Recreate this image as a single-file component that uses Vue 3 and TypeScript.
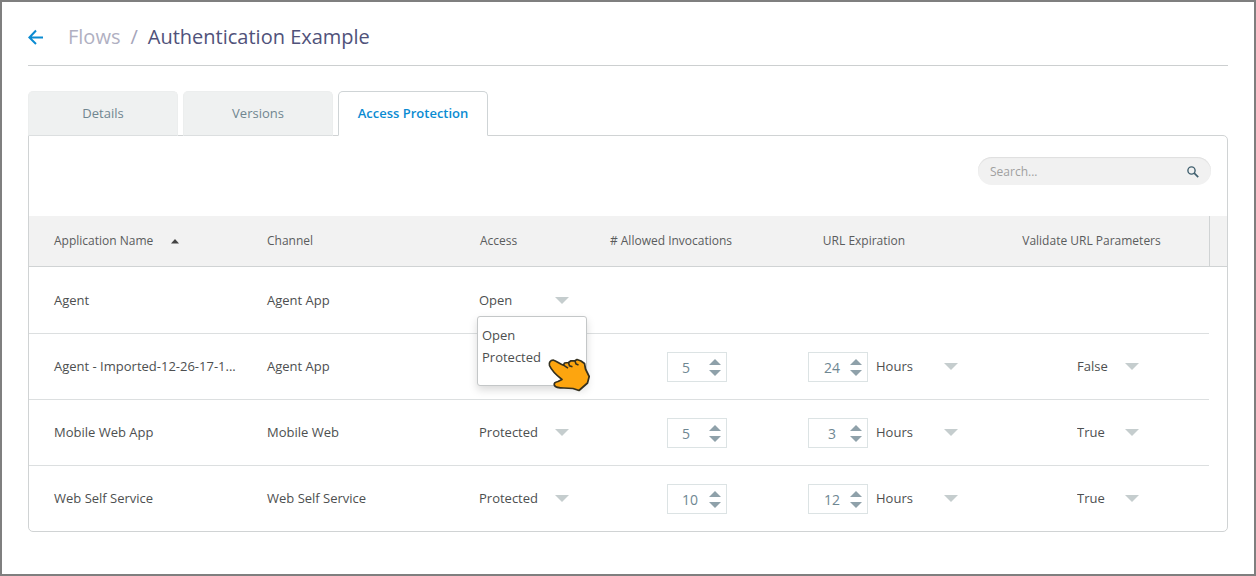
<script setup lang="ts">
import { ref } from 'vue'

interface AppRow {
  id: string
  name: string
  channel: string
  access: string
  invocations?: number
  expiration?: number
  unit?: string
  validate?: string
}

const tabs = ['Details', 'Versions', 'Access Protection']
const activeTab = ref('Access Protection')
const search = ref('')
const openRow = ref('agent')
const accessOptions = ['Open', 'Protected']

const rows = ref<AppRow[]>([
  { id: 'agent', name: 'Agent', channel: 'Agent App', access: 'Open' },
  {
    id: 'imported',
    name: 'Agent - Imported-12-26-17-1...',
    channel: 'Agent App',
    access: 'Protected',
    invocations: 5,
    expiration: 24,
    unit: 'Hours',
    validate: 'False',
  },
  {
    id: 'mobile',
    name: 'Mobile Web App',
    channel: 'Mobile Web',
    access: 'Protected',
    invocations: 5,
    expiration: 3,
    unit: 'Hours',
    validate: 'True',
  },
  {
    id: 'self',
    name: 'Web Self Service',
    channel: 'Web Self Service',
    access: 'Protected',
    invocations: 10,
    expiration: 12,
    unit: 'Hours',
    validate: 'True',
  },
])

function step(row: AppRow, key: 'invocations' | 'expiration', delta: number) {
  row[key] = Math.max(0, (row[key] ?? 0) + delta)
}

function choose(row: AppRow, option: string) {
  row.access = option
  openRow.value = ''
}
</script>

<template>
  <main class="page">
    <header class="head">
      <a href="#flows" class="back" aria-label="Back to flows">
        <svg width="16" height="16" viewBox="0 0 16 16" fill="none" stroke="#0a8bd2" stroke-width="2">
          <path d="M15 8.500H1.500M8 1.500L1.400 8.500l6.600 6.500" />
        </svg>
      </a>
      <a href="#flows" class="crumb">Flows</a>
      <span class="slash">/</span>
      <h1 class="title">Authentication Example</h1>
    </header>

    <div class="tabs" role="tablist">
      <button
        v-for="tab in tabs"
        :key="tab"
        type="button"
        role="tab"
        class="tab"
        :class="{ active: tab === activeTab }"
        :aria-selected="tab === activeTab"
        @click="activeTab = tab"
      >
        {{ tab }}
      </button>
    </div>

    <section class="panel">
      <div class="toolbar">
        <label class="search">
          <input v-model="search" type="text" placeholder="Search..." aria-label="Search" />
          <svg width="12" height="12" viewBox="0 0 12 12" fill="none" stroke="#41606f">
            <circle cx="4.5" cy="4.5" r="3.6" stroke-width="1.4" />
            <path d="M7.2 7.2l4 4" stroke-width="1.7" />
          </svg>
        </label>
      </div>

      <table class="grid">
        <colgroup>
          <col class="c-name" />
          <col class="c-channel" />
          <col class="c-access" />
          <col class="c-inv" />
          <col class="c-exp" />
          <col class="c-val" />
          <col class="c-gutter" />
        </colgroup>
        <thead>
          <tr>
            <th scope="col">
              <span class="sorted">
                Application Name
                <svg width="8" height="5" viewBox="0 0 8 5"><path d="M0 4.5L4 0l4 4.5z" fill="#444" /></svg>
              </span>
            </th>
            <th scope="col">Channel</th>
            <th scope="col">Access</th>
            <th scope="col" class="mid"># Allowed Invocations</th>
            <th scope="col" class="mid">URL Expiration</th>
            <th scope="col" class="mid">Validate URL Parameters</th>
            <td class="gutter"></td>
          </tr>
        </thead>
        <tbody>
          <tr v-for="row in rows" :key="row.id">
            <td class="name">{{ row.name }}</td>
            <td class="channel">{{ row.channel }}</td>
            <td class="access">
              <div class="pick pick-access">
                <select v-model="row.access" :aria-label="`Access for ${row.name}`">
                  <option v-for="o in accessOptions" :key="o">{{ o }}</option>
                </select>
                <svg width="14" height="7" viewBox="0 0 14 7"><path d="M0 0h14L7 7z" /></svg>
                <div v-if="row.id === openRow" class="menu" role="listbox" aria-label="Access options">
                  <button
                    v-for="o in accessOptions"
                    :key="o"
                    type="button"
                    role="option"
                    class="menu-item"
                    :aria-selected="o === row.access"
                    @click="choose(row, o)"
                  >
                    {{ o }}
                  </button>
                  <svg class="hand" width="46" height="38" viewBox="0 0 46 38">
                    <path
                      d="M2.500 8.500C1.500 5.500 3.500 3 6.500 3.200C9.500 4.200 13 7 16.500 8.200L17.500 6L21.500 5.500L24 3.800L28 3.800L30 2.500L34 4L37.500 6.500L38.500 12L42.200 19.500L40.500 26L32 33.500L26 31.500L17 31C12 31 8.500 30.500 7.500 28.500C6.500 26.500 8 25 11 24.500L15 22.500C10.500 19 5 14.500 2.500 8.500Z"
                      fill="#fda50f"
                      stroke="#34301f"
                      stroke-width="1.7"
                      stroke-linejoin="round"
                    />
                    <path
                      d="M16.500 8.200l4.500 3M21.500 5.800l1 3 3 1M28 4l1 3 2.500 1"
                      fill="none"
                      stroke="#34301f"
                      stroke-width="1.6"
                    />
                  </svg>
                </div>
              </div>
            </td>
            <td class="inv">
              <div v-if="row.invocations !== undefined" class="spin spin-left">
                <input v-model="row.invocations" type="number" :aria-label="`Allowed invocations for ${row.name}`" />
                <span class="steps">
                  <button type="button" aria-label="Increase" @click="step(row, 'invocations', 1)">
                    <svg width="12" height="6" viewBox="0 0 12 6"><path d="M0 6h12L6 0z" /></svg>
                  </button>
                  <button type="button" aria-label="Decrease" @click="step(row, 'invocations', -1)">
                    <svg width="12" height="6" viewBox="0 0 12 6"><path d="M0 0h12L6 6z" /></svg>
                  </button>
                </span>
              </div>
            </td>
            <td class="exp">
              <div v-if="row.expiration !== undefined" class="duration">
                <div class="spin">
                  <input v-model="row.expiration" type="number" :aria-label="`URL expiration for ${row.name}`" />
                  <span class="steps">
                    <button type="button" aria-label="Increase" @click="step(row, 'expiration', 1)">
                      <svg width="12" height="6" viewBox="0 0 12 6"><path d="M0 6h12L6 0z" /></svg>
                    </button>
                    <button type="button" aria-label="Decrease" @click="step(row, 'expiration', -1)">
                      <svg width="12" height="6" viewBox="0 0 12 6"><path d="M0 0h12L6 6z" /></svg>
                    </button>
                  </span>
                </div>
                <div class="pick pick-unit">
                  <select v-model="row.unit" :aria-label="`Expiration unit for ${row.name}`">
                    <option>Hours</option>
                    <option>Days</option>
                  </select>
                  <svg width="14" height="7" viewBox="0 0 14 7"><path d="M0 0h14L7 7z" /></svg>
                </div>
              </div>
            </td>
            <td class="val">
              <div v-if="row.validate" class="pick pick-bool">
                <select v-model="row.validate" :aria-label="`Validate URL parameters for ${row.name}`">
                  <option>True</option>
                  <option>False</option>
                </select>
                <svg width="14" height="7" viewBox="0 0 14 7"><path d="M0 0h14L7 7z" /></svg>
              </div>
            </td>
            <td class="gutter"></td>
          </tr>
        </tbody>
      </table>
    </section>
  </main>
</template>

<style>
body {
  background: #fff;
}
</style>

<style scoped>
* {
  box-sizing: border-box;
}

.page {
  min-height: 100vh;
  border: 2px solid #7f7f7f;
  padding: 0 26px 26px;
  background: #fff;
  color: #4d4f50;
  font-family: 'Open Sans', 'Noto Sans', sans-serif;
  font-size: 13px;
  line-height: 18px;
}

button,
input,
select {
  font: inherit;
  color: inherit;
  margin: 0;
  padding: 0;
  border: 0;
  background: none;
  outline: none;
}

button {
  cursor: pointer;
}

.head {
  display: flex;
  align-items: center;
  height: 64px;
  padding-top: 6px;
  border-bottom: 1px solid #cccfd0;
  font-size: 20px;
  line-height: 28px;
}

.back {
  display: flex;
  margin-right: 24px;
}

.crumb {
  color: #b0b0c2;
  text-decoration: none;
}

.slash {
  margin: 0 10px;
  color: #a5a5ba;
}

.title {
  margin: 0;
  font-size: 20px;
  font-weight: 400;
  color: #50527a;
}

.tabs {
  position: relative;
  z-index: 1;
  display: flex;
  gap: 5px;
  margin: 25px 0 -1px;
}

.tab {
  width: 150px;
  height: 45px;
  padding-bottom: 2px;
  border: 1px solid #eceeee;
  border-bottom-color: #dcdfe0;
  border-radius: 5px 5px 0 0;
  background: #eff1f1;
  color: #708690;
}

.tab.active {
  border-color: #cfd4d6;
  border-bottom-color: #fff;
  background: #fff;
  color: #0a8bd2;
  font-weight: 600;
}

.panel {
  border: 1px solid #d0d3d4;
  border-radius: 0 5px 5px 5px;
}

.toolbar {
  display: flex;
  justify-content: flex-end;
  height: 80px;
  padding: 21px 16px 0 0;
}

.search {
  display: flex;
  align-items: center;
  width: 233px;
  height: 28px;
  padding: 1px 12px 0;
  border-radius: 14px;
  background: #f1f1f1;
  box-shadow: inset 0 1px 1px #dedede;
}

.search input {
  flex: 1;
  min-width: 0;
  font-size: 12px;
}

.search input::placeholder {
  color: #a0a0a0;
  opacity: 1;
}

.grid {
  width: 100%;
  table-layout: fixed;
  border-collapse: separate;
  border-spacing: 0;
}

.c-name,
.c-channel {
  width: 213px;
}

.c-access {
  width: 133px;
}

.c-inv {
  width: 166px;
}

.c-exp {
  width: 220px;
}

.c-val {
  width: 235px;
}

.c-gutter {
  width: 18px;
}

thead th,
thead td {
  height: 51px;
  padding: 0 0 0 25px;
  border-bottom: 1px solid #d0d3d4;
  background: #f2f2f2;
  color: #5a5c5d;
  font-size: 12px;
  font-weight: 500;
  text-align: left;
}

thead .mid {
  padding: 0;
  text-align: center;
}

thead .gutter {
  padding: 0;
  border-left: 1px solid #d0d3d4;
}

.sorted {
  display: flex;
  align-items: center;
  gap: 18px;
}

tbody td {
  height: 66px;
  padding: 0 0 0 25px;
  border-bottom: 1px solid #dcdfe0;
}

tbody tr:first-child td {
  height: 67px;
}

tbody tr:last-child td {
  height: 65px;
  border-bottom: 0;
}

tbody .gutter {
  padding: 0;
  border-bottom: 0;
}

tbody .name,
tbody .channel {
  padding-bottom: 1px;
}

.name {
  overflow: hidden;
  text-overflow: ellipsis;
  white-space: nowrap;
}

tbody .access {
  padding-left: 24px;
}

tbody .inv {
  padding-left: 79px;
}

tbody .exp {
  padding-left: 54px;
}

tbody .val {
  padding-left: 103px;
}

.pick {
  position: relative;
  display: flex;
  align-items: center;
}

.pick select {
  flex: 1;
  min-width: 0;
  padding-bottom: 1px;
  appearance: none;
}

.pick > svg {
  flex: none;
  fill: #c5cdce;
}

.pick-access {
  width: 90px;
}

.pick-unit {
  width: 82px;
}

.pick-bool {
  width: 62px;
}

.duration {
  display: flex;
  align-items: center;
  gap: 8px;
}

.spin {
  display: flex;
  align-items: center;
  width: 60px;
  height: 30px;
  padding-right: 5px;
  border: 1px solid #dce3e4;
  color: #6f8792;
}

.spin input {
  flex: 1;
  min-width: 0;
  height: 28px;
  padding: 2px 0 0 5px;
  font-size: 14px;
  text-align: center;
  appearance: textfield;
}

.spin-left input {
  padding-left: 14px;
  text-align: left;
}

.spin input::-webkit-inner-spin-button {
  display: none;
}

.steps {
  display: flex;
  flex-direction: column;
  gap: 5px;
  padding-top: 2px;
}

.steps button {
  display: flex;
}

.steps svg {
  fill: #8fa1aa;
}

.menu {
  position: absolute;
  z-index: 2;
  top: 25px;
  left: -2px;
  width: 110px;
  height: 70px;
  padding: 7px 4px;
  border: 1px solid #c4c7c8;
  border-radius: 3px;
  background: #fff;
  box-shadow: 0 4px 8px rgba(0, 0, 0, 0.15);
}

.menu-item {
  display: block;
  width: 100%;
  height: 22px;
  text-align: left;
}

.hand {
  position: absolute;
  top: 40px;
  left: 69px;
}
</style>
